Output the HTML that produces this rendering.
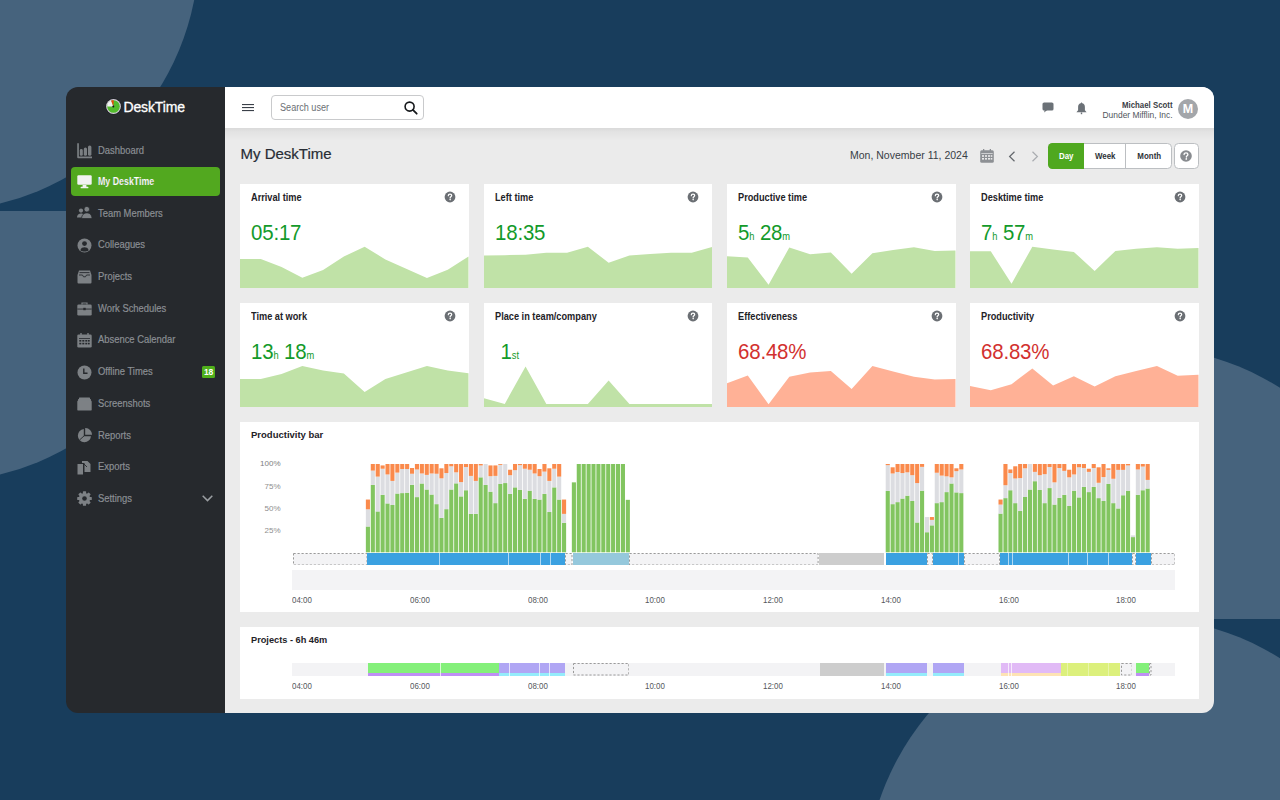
<!DOCTYPE html>
<html><head><meta charset="utf-8">
<style>
*{margin:0;padding:0;box-sizing:border-box}
html,body{width:1280px;height:800px;overflow:hidden}
body{background:#183d5c;font-family:"Liberation Sans",sans-serif;position:relative}
.abs{position:absolute}
.circ{position:absolute;border-radius:50%;background:#46637d}
#app{position:absolute;left:66px;top:87px;width:1147.7px;height:625.5px}
#side{position:absolute;left:0;top:0;width:159px;height:100%;background:#26292d;border-radius:12px 0 0 12px}
#mainbg{position:absolute;left:159px;top:0;right:0;height:100%;background:#ebebeb;border-radius:0 12px 12px 0}
#top{position:absolute;left:159px;top:0;right:0;height:41px;background:#fff;border-radius:0 12px 0 0}
#tsh{position:absolute;left:159px;top:41px;right:0;height:13px;background:linear-gradient(rgba(0,0,0,0.075),rgba(0,0,0,0.035) 30%,rgba(0,0,0,0))}
.mi{position:absolute;left:97.5px;font-size:11px;color:#8b8f94;-webkit-text-stroke:0.2px #8b8f94;line-height:14px;white-space:nowrap;transform:scaleX(0.855) translateY(-0.8px);transform-origin:0 0}
.ic{position:absolute;left:77px}
.card{position:absolute;width:228.5px;height:104.2px;background:#fff;overflow:hidden}
.ct{position:absolute;left:11px;top:8.1px;font-size:10px;font-weight:bold;color:#1e2227;line-height:12px;white-space:nowrap;transform:scaleX(0.92);transform-origin:0 0}
.hq{position:absolute;left:203.9px;top:6.8px}
.cv{position:absolute;left:11px;top:37.3px;font-size:22px;line-height:24px;white-space:nowrap;letter-spacing:-0.2px;transform:scaleX(0.93);transform-origin:0 0}
.cv small{font-size:10px;letter-spacing:0}
.cc{position:absolute;left:0;top:0}
.panel{position:absolute;left:240px;width:958.7px;background:#fff}
.pt{position:absolute;font-size:9.5px;font-weight:bold;color:#1e2227;line-height:12px;white-space:nowrap}
.yl{position:absolute;font-size:8px;color:#8e8e8e;line-height:10px;text-align:right;width:40.5px;left:240px}
.tl{position:absolute;font-size:8.8px;color:#55585c;line-height:10px;white-space:nowrap;transform:scaleX(0.9);transform-origin:0 0}
.dash{position:absolute;background:#f3f3f5;border:1px dashed #a9a9a9}
.seg{position:absolute;top:144.2px;height:25.7px;font-size:9px;font-weight:bold;line-height:25.7px;text-align:center;color:#2d3238;transform:scaleX(0.88)}
</style></head><body>
<div class="circ" style="left:-323.5px;top:-311.5px;width:522px;height:522px"></div>
<div class="abs" style="left:0;top:211px;width:300px;height:300px;overflow:hidden"><div class="circ" style="left:-323.5px;top:-251.5px;width:522px;height:522px"></div></div>
<div class="abs" style="left:800px;top:300px;width:480px;height:319px;overflow:hidden"><div class="circ" style="left:64.8px;top:46.4px;width:541.2px;height:541.2px"></div></div>
<div class="circ" style="left:865.4px;top:616.7px;width:541.2px;height:541.2px"></div>

<div id="app">
  <div id="mainbg"></div><div id="side"></div>
  <div id="top"></div><div id="tsh"></div>
</div>

<!-- logo -->
<svg class="abs" style="left:105px;top:97.6px" width="17" height="17" viewBox="0 0 17 17">
 <circle cx="8.5" cy="8.5" r="8" fill="#1a1c1f"/>
 <circle cx="8.5" cy="8.5" r="7.4" fill="#d2ccd8"/>
 <circle cx="8.5" cy="8.5" r="6.3" fill="#52bb2c"/>
 <path d="M8.4 8.5 L2.2 8.5 A6.3 6.3 0 0 1 6.1 2.6 Z" fill="#f2f0f4"/>
 <path d="M8.4 8.5 L6.1 2.6 A6.3 6.3 0 0 1 8.7 2.2 Z" fill="#f0440f"/>
 <circle cx="8.3" cy="8.5" r="1" fill="#15121c"/>
</svg>
<div class="abs" style="left:123.5px;top:99px;font-size:14px;line-height:17px;color:#fff;letter-spacing:-0.15px;-webkit-text-stroke:0.3px #fff">DeskTime</div>

<!-- menu -->
<svg class="ic" style="top:142.5px" width="16" height="16" viewBox="0 0 16 16" fill="#7b7f83"><path d="M0.2 0.3 H1.9 V13.6 H15 V15.3 H1.2 A1 1 0 0 1 0.2 14.3 Z"/><rect x="2.8" y="6" width="3" height="6.8" rx="1.4"/><rect x="6.8" y="4.4" width="3.2" height="8.4" rx="1.5"/><rect x="11" y="2.4" width="3.4" height="10.4" rx="1.6"/></svg>
<div class="mi" style="top:143.5px">Dashboard</div>

<div class="abs" style="left:70.5px;top:167px;width:149.3px;height:29.3px;border-radius:4px;background:#52a81f"></div>
<svg class="ic" style="top:174.5px" width="15" height="14" viewBox="0 0 15 14" fill="#f2f2f2"><rect x="0.3" y="0.3" width="14.4" height="9.5" rx="1.2"/><rect x="5.6" y="10" width="3.8" height="2"/><rect x="3.6" y="11.8" width="7.8" height="1.5" rx="0.5"/></svg>
<div class="mi" style="top:173.9px;color:#fff;font-weight:bold;font-size:10.5px;transform:scaleX(0.84)">My DeskTime</div>

<svg class="ic" style="top:206px" width="15" height="14" viewBox="0 0 15 14" fill="#7d8185"><circle cx="4" cy="4.6" r="2.1"/><path d="M0 11.6 C0 8.8 1.8 7.6 4 7.6 C5.6 7.6 6.6 8.2 7 9 L6 11.6 Z"/><circle cx="9.8" cy="3.2" r="2.8" stroke="#26292d" stroke-width="0.8"/><path d="M4.6 12.6 C4.6 8.6 7.2 6.9 9.8 6.9 C12.6 6.9 15 8.6 15 12.6 Z" stroke="#26292d" stroke-width="0.8"/></svg>
<div class="mi" style="top:206.5px">Team Members</div>

<svg class="ic" style="top:238px" width="15" height="15" viewBox="0 0 15 15"><circle cx="7.5" cy="7.5" r="7" fill="#7d8185"/><circle cx="7.5" cy="5.6" r="2.4" fill="#26292d"/><path d="M3.3 12.2 C4 9.8 5.8 9.2 7.5 9.2 C9.2 9.2 11 9.8 11.7 12.2 C10.5 13.2 9 13.6 7.5 13.6 C6 13.6 4.5 13.2 3.3 12.2Z" fill="#26292d"/></svg>
<div class="mi" style="top:238.2px">Colleagues</div>

<svg class="ic" style="top:270px" width="15" height="14" viewBox="0 0 15 14" fill="#7d8185"><path d="M2 0.5 H13 L14.5 5 V12.5 A1 1 0 0 1 13.5 13.5 H1.5 A1 1 0 0 1 0.5 12.5 V5 Z"/><rect x="2.5" y="2.2" width="10" height="0.9" fill="#26292d"/><path d="M2 5 H5.5 L6.5 6.8 H8.5 L9.5 5 H13" stroke="#26292d" stroke-width="0.9" fill="none"/></svg>
<div class="mi" style="top:270px">Projects</div>

<svg class="ic" style="top:301.5px" width="15" height="14" viewBox="0 0 15 14" fill="#7d8185"><path d="M5 2.5 V1 H10 V2.5" stroke="#7d8185" stroke-width="1.2" fill="none"/><rect x="0.3" y="2.5" width="14.4" height="11" rx="1.3"/><rect x="0.3" y="6.6" width="14.4" height="0.9" fill="#26292d"/><rect x="6.3" y="5.8" width="2.4" height="2.4" fill="#26292d"/></svg>
<div class="mi" style="top:301.5px">Work Schedules</div>

<svg class="ic" style="top:333px" width="15" height="15" viewBox="0 0 15 15" fill="#7d8185"><rect x="0.3" y="1.5" width="14.4" height="13" rx="1.3"/><rect x="3.3" y="0" width="1.4" height="3"/><rect x="10.3" y="0" width="1.4" height="3"/><g fill="#26292d"><rect x="2" y="5" width="11" height="0.8"/><rect x="2.3" y="7" width="2" height="1.6"/><rect x="5.3" y="7" width="2" height="1.6"/><rect x="8.3" y="7" width="2" height="1.6"/><rect x="11" y="7" width="1.7" height="1.6"/><rect x="2.3" y="9.8" width="2" height="1.6"/><rect x="5.3" y="9.8" width="2" height="1.6"/><rect x="8.3" y="9.8" width="2" height="1.6"/><rect x="11" y="9.8" width="1.7" height="1.6"/></g></svg>
<div class="mi" style="top:333px">Absence Calendar</div>

<svg class="ic" style="top:364.5px" width="15" height="15" viewBox="0 0 15 15"><circle cx="7.5" cy="7.5" r="7" fill="#7d8185"/><path d="M6.8 3.5 V8.2 H10.5" stroke="#26292d" stroke-width="1.4" fill="none"/></svg>
<div class="mi" style="top:364.5px">Offline Times</div>
<div class="abs" style="left:201.8px;top:366px;width:13.2px;height:11.6px;background:#50b01b;border-radius:1.5px;color:#fff;font-size:8.5px;font-weight:bold;line-height:13.4px;text-align:center;letter-spacing:-0.3px">18</div>

<svg class="ic" style="top:396.5px" width="15" height="14" viewBox="0 0 15 14" fill="#7d8185"><rect x="2" y="0.5" width="11" height="2" rx="0.6"/><rect x="1" y="2" width="13" height="2" rx="0.6"/><rect x="0.3" y="3.6" width="14.4" height="10" rx="1.2"/></svg>
<div class="mi" style="top:396.5px">Screenshots</div>

<svg class="ic" style="top:428px" width="15" height="15" viewBox="0 0 15 15" fill="#7d8185"><path d="M6.8 1 A6.6 6.6 0 1 0 14 8.2 H6.8 Z"/><path d="M8.2 0 A6.6 6.6 0 0 1 15 6.8 H8.2 Z"/><path d="M7.5 7.5 L2.5 12" stroke="#26292d" stroke-width="0.9"/></svg>
<div class="mi" style="top:428.5px">Reports</div>

<svg class="ic" style="top:459.5px" width="15" height="15" viewBox="0 0 15 15" fill="#7d8185"><path d="M0.5 4 H6 V14.5 H0.5 Z"/><path d="M5 1 H10.5 L13.5 4 V12 H7.5 V3 H5 Z"/><path d="M7 4 L10 7" stroke="#26292d" stroke-width="0.9"/></svg>
<div class="mi" style="top:459.5px">Exports</div>

<svg class="ic" style="top:491px" width="15" height="15" viewBox="0 0 15 15"><g fill="#7d8185" transform="translate(7.5 7.5)"><circle r="5.6"/><rect x="-1.6" y="-7.3" width="3.2" height="14.6" rx="0.6"/><rect x="-1.6" y="-7.3" width="3.2" height="14.6" rx="0.6" transform="rotate(45)"/><rect x="-1.6" y="-7.3" width="3.2" height="14.6" rx="0.6" transform="rotate(90)"/><rect x="-1.6" y="-7.3" width="3.2" height="14.6" rx="0.6" transform="rotate(135)"/></g><circle cx="7.5" cy="7.5" r="2.3" fill="#26292d"/></svg>
<div class="mi" style="top:492px">Settings</div>
<svg class="abs" style="left:201.5px;top:494.5px" width="11" height="7" viewBox="0 0 11 7"><path d="M0.7 0.8 L5.5 5.6 L10.3 0.8" stroke="#9a9ea2" stroke-width="1.5" fill="none"/></svg>

<!-- topbar -->
<svg class="abs" style="left:242px;top:103px" width="12" height="9" viewBox="0 0 12 9"><g fill="#3a4049"><rect x="0" y="1" width="12" height="1.1"/><rect x="0" y="4" width="12" height="1.1"/><rect x="0" y="7" width="12" height="1.1"/></g></svg>
<div class="abs" style="left:271px;top:94.7px;width:153px;height:25.5px;border:1px solid #c9cacc;border-radius:4px;background:#fff"></div>
<div class="abs" style="left:279.5px;top:102px;font-size:10px;line-height:12px;color:#6b6f74;transform:scaleX(0.91);transform-origin:0 0">Search user</div>
<svg class="abs" style="left:403.5px;top:101.3px" width="14" height="14" viewBox="0 0 14 14"><circle cx="5.6" cy="5.6" r="4.5" stroke="#15181b" stroke-width="1.6" fill="none"/><path d="M8.9 8.9 L12.7 12.7" stroke="#15181b" stroke-width="1.8" stroke-linecap="round"/></svg>

<svg class="abs" style="left:1041.5px;top:102.3px" width="12" height="11" viewBox="0 0 12 11"><rect x="0.5" y="0.4" width="11" height="8.2" rx="1.6" fill="#6b7177"/><path d="M2.6 8 L2.2 10.6 L5.2 8 Z" fill="#6b7177"/></svg>
<svg class="abs" style="left:1075.5px;top:101.5px" width="11" height="13" viewBox="0 0 11 13"><path d="M5.5 0.3 L6.3 1.3 C8.3 1.8 8.9 3.3 8.9 5.3 V8.3 L10.6 10.3 H0.4 L2.1 8.3 V5.3 C2.1 3.3 2.7 1.8 4.7 1.3 Z" fill="#6b7177"/><rect x="4.8" y="10.5" width="1.4" height="1.7" fill="#6b7177"/></svg>

<div class="abs" style="left:1060px;top:99.5px;width:112.5px;text-align:right;font-size:8.8px;line-height:10px;font-weight:bold;color:#3b4046;transform:scaleX(0.89);transform-origin:100% 0">Michael Scott</div>
<div class="abs" style="left:1060px;top:109.9px;width:112.5px;text-align:right;font-size:8.8px;line-height:10px;color:#51565c;transform:scaleX(0.956);transform-origin:100% 0">Dunder Mifflin, Inc.</div>
<div class="abs" style="left:1177.8px;top:98.8px;width:20.4px;height:20.4px;border-radius:50%;background:#a3a6aa;color:#fff;font-size:12.5px;font-weight:bold;line-height:20.4px;text-align:center">M</div>

<!-- header row -->
<div class="abs" style="left:240.5px;top:145px;font-size:15px;line-height:17px;color:#272d35;-webkit-text-stroke:0.2px #272d35">My DeskTime</div>
<div class="abs" style="left:850px;top:148.5px;font-size:11.3px;line-height:13px;color:#383e46;transform:scaleX(0.93);transform-origin:0 0">Mon, November 11, 2024</div>
<svg class="abs" style="left:979.5px;top:149.2px" width="14" height="14" viewBox="0 0 14 14" fill="#8d9094"><rect x="0.2" y="1.3" width="13.6" height="12.4" rx="1.5"/><rect x="3" y="0" width="1.3" height="2.6"/><rect x="9.7" y="0" width="1.3" height="2.6"/><g fill="#ebebeb"><rect x="1.3" y="4.3" width="11.4" height="0.7"/><rect x="2" y="6.2" width="2" height="1.6"/><rect x="5" y="6.2" width="2" height="1.6"/><rect x="8" y="6.2" width="2" height="1.6"/><rect x="10.7" y="6.2" width="1.6" height="1.6"/><rect x="2" y="9" width="2" height="1.6"/><rect x="5" y="9" width="2" height="1.6"/><rect x="8" y="9" width="2" height="1.6"/><rect x="10.7" y="9" width="1.6" height="1.6"/></g></svg>
<svg class="abs" style="left:1007.5px;top:151px" width="8" height="11" viewBox="0 0 8 11"><path d="M6.5 0.7 L1.6 5.5 L6.5 10.3" stroke="#63676c" stroke-width="1.2" fill="none"/></svg>
<svg class="abs" style="left:1030.5px;top:151px" width="8" height="11" viewBox="0 0 8 11"><path d="M1.5 0.7 L6.4 5.5 L1.5 10.3" stroke="#a9acb0" stroke-width="1.2" fill="none"/></svg>

<div class="abs" style="left:1048px;top:143.3px;width:124px;height:26px;border:1.3px solid #bcbfc2;border-radius:4.5px;background:#fff"></div>
<div class="abs" style="left:1048px;top:143.3px;width:35.8px;height:26px;border-radius:4.5px 0 0 4.5px;background:#4fa81f"></div>
<div class="abs" style="left:1124.8px;top:144px;width:1.2px;height:24.5px;background:#bcbfc2"></div>
<div class="seg" style="left:1048px;width:36.5px;color:#fff">Day</div>
<div class="seg" style="left:1084.5px;width:40.5px">Week</div>
<div class="seg" style="left:1125.5px;width:46.5px">Month</div>
<div class="abs" style="left:1174.2px;top:143.3px;width:24.5px;height:26px;border:1.3px solid #bcbfc2;border-radius:4.5px;background:#fff"></div>
<svg class="abs" style="left:1180.3px;top:150.4px" width="12" height="12" viewBox="0 0 12 12"><circle cx="6" cy="6" r="5.8" fill="#888b8f"/><path d="M4.1 4.6 C4.1 3.4 5 2.8 6 2.8 C7.1 2.8 7.9 3.5 7.9 4.4 C7.9 5.5 6.6 5.7 6.4 6.6 L6.4 7.1" stroke="#fff" stroke-width="1.35" fill="none" stroke-linecap="round"/><circle cx="6.3" cy="8.9" r="0.85" fill="#fff"/></svg>

<div class="card" style="left:240px;top:184.2px">
<div class="ct">Arrival time</div><svg class="hq" width="12" height="12" viewBox="0 0 12 12"><circle cx="6" cy="6" r="5.4" fill="#6b6f74"/><path d="M4.3 4.7 C4.3 3.6 5.1 3.1 6 3.1 C7 3.1 7.7 3.7 7.7 4.5 C7.7 5.5 6.5 5.7 6.2 6.5 L6.2 6.9" stroke="#fff" stroke-width="1.25" fill="none" stroke-linecap="round"/><circle cx="6.15" cy="8.6" r="0.8" fill="#fff"/></svg>
<div class="cv" style="color:#139a2a">05:17</div>
<svg class="cc" width="228.5" height="104.2" viewBox="0 0 228.5 104.2"><polygon points="0,104.2 0.00,75.00 20.77,75.00 41.55,83.00 62.32,93.70 83.09,86.00 103.86,72.50 124.64,62.80 145.41,75.40 166.18,84.70 186.95,94.00 207.73,85.70 228.50,72.50 228.5,104.2" fill="#c0e2a7"/></svg>
</div>
<div class="card" style="left:483.5px;top:184.2px">
<div class="ct">Left time</div><svg class="hq" width="12" height="12" viewBox="0 0 12 12"><circle cx="6" cy="6" r="5.4" fill="#6b6f74"/><path d="M4.3 4.7 C4.3 3.6 5.1 3.1 6 3.1 C7 3.1 7.7 3.7 7.7 4.5 C7.7 5.5 6.5 5.7 6.2 6.5 L6.2 6.9" stroke="#fff" stroke-width="1.25" fill="none" stroke-linecap="round"/><circle cx="6.15" cy="8.6" r="0.8" fill="#fff"/></svg>
<div class="cv" style="color:#139a2a">18:35</div>
<svg class="cc" width="228.5" height="104.2" viewBox="0 0 228.5 104.2"><polygon points="0,104.2 0.00,71.60 20.77,71.20 41.55,70.70 62.32,68.80 83.09,68.80 103.86,62.80 124.64,78.70 145.41,71.60 166.18,70.10 186.95,68.80 207.73,68.80 228.50,62.80 228.5,104.2" fill="#c0e2a7"/></svg>
</div>
<div class="card" style="left:727px;top:184.2px">
<div class="ct">Productive time</div><svg class="hq" width="12" height="12" viewBox="0 0 12 12"><circle cx="6" cy="6" r="5.4" fill="#6b6f74"/><path d="M4.3 4.7 C4.3 3.6 5.1 3.1 6 3.1 C7 3.1 7.7 3.7 7.7 4.5 C7.7 5.5 6.5 5.7 6.2 6.5 L6.2 6.9" stroke="#fff" stroke-width="1.25" fill="none" stroke-linecap="round"/><circle cx="6.15" cy="8.6" r="0.8" fill="#fff"/></svg>
<div class="cv" style="color:#139a2a">5<small>h</small> 28<small>m</small></div>
<svg class="cc" width="228.5" height="104.2" viewBox="0 0 228.5 104.2"><polygon points="0,104.2 0.00,72.20 20.77,73.50 41.55,100.70 62.32,63.55 83.09,70.30 103.86,68.40 124.64,89.80 145.41,69.20 166.18,66.00 186.95,63.20 207.73,66.90 228.50,66.40 228.5,104.2" fill="#c0e2a7"/></svg>
</div>
<div class="card" style="left:970.3px;top:184.2px">
<div class="ct">Desktime time</div><svg class="hq" width="12" height="12" viewBox="0 0 12 12"><circle cx="6" cy="6" r="5.4" fill="#6b6f74"/><path d="M4.3 4.7 C4.3 3.6 5.1 3.1 6 3.1 C7 3.1 7.7 3.7 7.7 4.5 C7.7 5.5 6.5 5.7 6.2 6.5 L6.2 6.9" stroke="#fff" stroke-width="1.25" fill="none" stroke-linecap="round"/><circle cx="6.15" cy="8.6" r="0.8" fill="#fff"/></svg>
<div class="cv" style="color:#139a2a">7<small>h</small> 57<small>m</small></div>
<svg class="cc" width="228.5" height="104.2" viewBox="0 0 228.5 104.2"><polygon points="0,104.2 0.00,67.30 20.77,67.30 41.55,99.70 62.32,62.80 83.09,65.40 103.86,67.90 124.64,87.00 145.41,66.90 166.18,64.70 186.95,63.20 207.73,64.70 228.50,64.10 228.5,104.2" fill="#c0e2a7"/></svg>
</div>
<div class="card" style="left:240px;top:303px">
<div class="ct">Time at work</div><svg class="hq" width="12" height="12" viewBox="0 0 12 12"><circle cx="6" cy="6" r="5.4" fill="#6b6f74"/><path d="M4.3 4.7 C4.3 3.6 5.1 3.1 6 3.1 C7 3.1 7.7 3.7 7.7 4.5 C7.7 5.5 6.5 5.7 6.2 6.5 L6.2 6.9" stroke="#fff" stroke-width="1.25" fill="none" stroke-linecap="round"/><circle cx="6.15" cy="8.6" r="0.8" fill="#fff"/></svg>
<div class="cv" style="color:#139a2a">13<small>h</small> 18<small>m</small></div>
<svg class="cc" width="228.5" height="104.2" viewBox="0 0 228.5 104.2"><polygon points="0,104.2 0.00,76.10 20.77,76.10 41.55,70.90 62.32,63.00 83.09,67.50 103.86,70.50 124.64,89.10 145.41,75.90 166.18,69.40 186.95,63.00 207.73,67.50 228.50,70.30 228.5,104.2" fill="#c0e2a7"/></svg>
</div>
<div class="card" style="left:483.5px;top:303px">
<div class="ct">Place in team/company</div><svg class="hq" width="12" height="12" viewBox="0 0 12 12"><circle cx="6" cy="6" r="5.4" fill="#6b6f74"/><path d="M4.3 4.7 C4.3 3.6 5.1 3.1 6 3.1 C7 3.1 7.7 3.7 7.7 4.5 C7.7 5.5 6.5 5.7 6.2 6.5 L6.2 6.9" stroke="#fff" stroke-width="1.25" fill="none" stroke-linecap="round"/><circle cx="6.15" cy="8.6" r="0.8" fill="#fff"/></svg>
<div class="cv" style="color:#139a2a"><span style="padding-left:6px"></span>1<small>st</small></div>
<svg class="cc" width="228.5" height="104.2" viewBox="0 0 228.5 104.2"><polygon points="0,104.2 0.00,95.25 20.77,100.90 41.55,63.40 62.32,100.90 83.09,100.90 103.86,100.90 124.64,77.40 145.41,100.90 166.18,100.90 186.95,100.90 207.73,100.90 228.50,100.90 228.5,104.2" fill="#c0e2a7"/></svg>
</div>
<div class="card" style="left:727px;top:303px">
<div class="ct">Effectiveness</div><svg class="hq" width="12" height="12" viewBox="0 0 12 12"><circle cx="6" cy="6" r="5.4" fill="#6b6f74"/><path d="M4.3 4.7 C4.3 3.6 5.1 3.1 6 3.1 C7 3.1 7.7 3.7 7.7 4.5 C7.7 5.5 6.5 5.7 6.2 6.5 L6.2 6.9" stroke="#fff" stroke-width="1.25" fill="none" stroke-linecap="round"/><circle cx="6.15" cy="8.6" r="0.8" fill="#fff"/></svg>
<div class="cv" style="color:#d2312f">68.48%</div>
<svg class="cc" width="228.5" height="104.2" viewBox="0 0 228.5 104.2"><polygon points="0,104.2 0.00,80.25 20.77,72.40 41.55,101.25 62.32,73.70 83.09,69.40 103.86,68.10 124.64,85.90 145.41,63.00 166.18,68.60 186.95,73.70 207.73,76.50 228.50,76.10 228.5,104.2" fill="#ffb196"/></svg>
</div>
<div class="card" style="left:970.3px;top:303px">
<div class="ct">Productivity</div><svg class="hq" width="12" height="12" viewBox="0 0 12 12"><circle cx="6" cy="6" r="5.4" fill="#6b6f74"/><path d="M4.3 4.7 C4.3 3.6 5.1 3.1 6 3.1 C7 3.1 7.7 3.7 7.7 4.5 C7.7 5.5 6.5 5.7 6.2 6.5 L6.2 6.9" stroke="#fff" stroke-width="1.25" fill="none" stroke-linecap="round"/><circle cx="6.15" cy="8.6" r="0.8" fill="#fff"/></svg>
<div class="cv" style="color:#d2312f">68.83%</div>
<svg class="cc" width="228.5" height="104.2" viewBox="0 0 228.5 104.2"><polygon points="0,104.2 0.00,83.10 20.77,87.20 41.55,81.20 62.32,65.60 83.09,82.50 103.86,73.30 124.64,83.40 145.41,73.30 166.18,68.10 186.95,63.00 207.73,72.75 228.50,71.80 228.5,104.2" fill="#ffb196"/></svg>
</div>

<!-- productivity panel -->
<div class="panel" style="top:421.8px;height:190.2px"></div>
<div class="pt" style="left:251px;top:429px">Productivity bar</div>
<div class="yl" style="top:459.2px;color:#7e7e7e">100%</div>
<div class="yl" style="top:481.6px">75%</div>
<div class="yl" style="top:503.6px">50%</div>
<div class="yl" style="top:525.6px">25%</div>
<svg class="abs" style="left:0;top:0" width="1280" height="800" viewBox="0 0 1280 800">
<rect x="365.86" y="526.50" width="4.10" height="25.80" fill="#82c560"/>
<rect x="365.86" y="509.30" width="4.10" height="17.20" fill="#dcdde1"/>
<rect x="365.86" y="499.55" width="4.10" height="9.75" fill="#fa8a4c"/>
<rect x="370.77" y="484.93" width="4.10" height="67.37" fill="#82c560"/>
<rect x="370.77" y="470.59" width="4.10" height="14.33" fill="#dcdde1"/>
<rect x="370.77" y="464.00" width="4.10" height="6.59" fill="#fa8a4c"/>
<rect x="375.67" y="511.45" width="4.10" height="40.85" fill="#82c560"/>
<rect x="375.67" y="476.61" width="4.10" height="34.83" fill="#dcdde1"/>
<rect x="375.67" y="464.00" width="4.10" height="12.61" fill="#fa8a4c"/>
<rect x="380.57" y="494.82" width="4.10" height="57.48" fill="#82c560"/>
<rect x="380.57" y="468.73" width="4.10" height="26.09" fill="#dcdde1"/>
<rect x="380.57" y="465.43" width="4.10" height="3.30" fill="#fa8a4c"/>
<rect x="385.48" y="503.42" width="4.10" height="48.88" fill="#82c560"/>
<rect x="385.48" y="474.46" width="4.10" height="28.96" fill="#dcdde1"/>
<rect x="385.48" y="464.00" width="4.10" height="10.46" fill="#fa8a4c"/>
<rect x="390.38" y="505.00" width="4.10" height="47.30" fill="#82c560"/>
<rect x="390.38" y="480.91" width="4.10" height="24.08" fill="#dcdde1"/>
<rect x="390.38" y="464.00" width="4.10" height="16.91" fill="#fa8a4c"/>
<rect x="395.29" y="493.53" width="4.10" height="58.77" fill="#82c560"/>
<rect x="395.29" y="472.60" width="4.10" height="20.93" fill="#dcdde1"/>
<rect x="395.29" y="464.00" width="4.10" height="8.60" fill="#fa8a4c"/>
<rect x="400.19" y="493.10" width="4.10" height="59.20" fill="#82c560"/>
<rect x="400.19" y="469.02" width="4.10" height="24.08" fill="#dcdde1"/>
<rect x="400.19" y="464.00" width="4.10" height="5.02" fill="#fa8a4c"/>
<rect x="405.09" y="492.67" width="4.10" height="59.63" fill="#82c560"/>
<rect x="405.09" y="469.02" width="4.10" height="23.65" fill="#dcdde1"/>
<rect x="405.09" y="464.00" width="4.10" height="5.02" fill="#fa8a4c"/>
<rect x="410.00" y="484.78" width="4.10" height="67.52" fill="#82c560"/>
<rect x="410.00" y="473.75" width="4.10" height="11.04" fill="#dcdde1"/>
<rect x="410.00" y="468.01" width="4.10" height="5.73" fill="#fa8a4c"/>
<rect x="414.90" y="497.11" width="4.10" height="55.19" fill="#82c560"/>
<rect x="414.90" y="469.45" width="4.10" height="27.67" fill="#dcdde1"/>
<rect x="414.90" y="464.00" width="4.10" height="5.45" fill="#fa8a4c"/>
<rect x="419.81" y="483.49" width="4.10" height="68.81" fill="#82c560"/>
<rect x="419.81" y="473.46" width="4.10" height="10.03" fill="#dcdde1"/>
<rect x="419.81" y="464.00" width="4.10" height="9.46" fill="#fa8a4c"/>
<rect x="424.71" y="489.52" width="4.10" height="62.78" fill="#82c560"/>
<rect x="424.71" y="474.89" width="4.10" height="14.62" fill="#dcdde1"/>
<rect x="424.71" y="464.00" width="4.10" height="10.89" fill="#fa8a4c"/>
<rect x="429.61" y="494.53" width="4.10" height="57.77" fill="#82c560"/>
<rect x="429.61" y="473.46" width="4.10" height="21.07" fill="#dcdde1"/>
<rect x="429.61" y="464.00" width="4.10" height="9.46" fill="#fa8a4c"/>
<rect x="434.52" y="504.14" width="4.10" height="48.16" fill="#82c560"/>
<rect x="434.52" y="473.75" width="4.10" height="30.39" fill="#dcdde1"/>
<rect x="434.52" y="464.00" width="4.10" height="9.75" fill="#fa8a4c"/>
<rect x="439.42" y="517.90" width="4.10" height="34.40" fill="#82c560"/>
<rect x="439.42" y="478.33" width="4.10" height="39.56" fill="#dcdde1"/>
<rect x="439.42" y="468.30" width="4.10" height="10.03" fill="#fa8a4c"/>
<rect x="444.33" y="509.15" width="4.10" height="43.15" fill="#82c560"/>
<rect x="444.33" y="473.03" width="4.10" height="36.12" fill="#dcdde1"/>
<rect x="444.33" y="464.00" width="4.10" height="9.03" fill="#fa8a4c"/>
<rect x="449.23" y="489.52" width="4.10" height="62.78" fill="#82c560"/>
<rect x="449.23" y="466.29" width="4.10" height="23.22" fill="#dcdde1"/>
<rect x="449.23" y="464.00" width="4.10" height="2.29" fill="#fa8a4c"/>
<rect x="454.13" y="483.35" width="4.10" height="68.95" fill="#82c560"/>
<rect x="454.13" y="472.31" width="4.10" height="11.04" fill="#dcdde1"/>
<rect x="454.13" y="464.00" width="4.10" height="8.31" fill="#fa8a4c"/>
<rect x="459.04" y="496.40" width="4.10" height="55.90" fill="#82c560"/>
<rect x="459.04" y="482.06" width="4.10" height="14.33" fill="#dcdde1"/>
<rect x="459.04" y="464.00" width="4.10" height="18.06" fill="#fa8a4c"/>
<rect x="463.94" y="490.23" width="4.10" height="62.07" fill="#82c560"/>
<rect x="463.94" y="467.01" width="4.10" height="23.22" fill="#dcdde1"/>
<rect x="463.94" y="464.00" width="4.10" height="3.01" fill="#fa8a4c"/>
<rect x="468.85" y="513.88" width="4.10" height="38.42" fill="#82c560"/>
<rect x="468.85" y="475.90" width="4.10" height="37.99" fill="#dcdde1"/>
<rect x="468.85" y="464.00" width="4.10" height="11.90" fill="#fa8a4c"/>
<rect x="473.75" y="513.88" width="4.10" height="38.42" fill="#82c560"/>
<rect x="473.75" y="480.91" width="4.10" height="32.97" fill="#dcdde1"/>
<rect x="473.75" y="464.00" width="4.10" height="16.91" fill="#fa8a4c"/>
<rect x="478.65" y="477.33" width="4.10" height="74.97" fill="#82c560"/>
<rect x="478.65" y="465.43" width="4.10" height="11.90" fill="#dcdde1"/>
<rect x="478.65" y="464.00" width="4.10" height="1.43" fill="#fa8a4c"/>
<rect x="483.56" y="484.93" width="4.10" height="67.37" fill="#82c560"/>
<rect x="483.56" y="464.00" width="4.10" height="20.93" fill="#dcdde1"/>
<rect x="488.46" y="491.67" width="4.10" height="60.63" fill="#82c560"/>
<rect x="488.46" y="476.18" width="4.10" height="15.48" fill="#dcdde1"/>
<rect x="488.46" y="465.43" width="4.10" height="10.75" fill="#fa8a4c"/>
<rect x="493.37" y="503.13" width="4.10" height="49.17" fill="#82c560"/>
<rect x="493.37" y="475.90" width="4.10" height="27.24" fill="#dcdde1"/>
<rect x="493.37" y="465.43" width="4.10" height="10.46" fill="#fa8a4c"/>
<rect x="498.27" y="483.78" width="4.10" height="68.52" fill="#82c560"/>
<rect x="498.27" y="464.86" width="4.10" height="18.92" fill="#dcdde1"/>
<rect x="498.27" y="464.00" width="4.10" height="0.86" fill="#fa8a4c"/>
<rect x="503.17" y="483.06" width="4.10" height="69.24" fill="#82c560"/>
<rect x="503.17" y="464.00" width="4.10" height="19.06" fill="#dcdde1"/>
<rect x="508.08" y="493.82" width="4.10" height="58.48" fill="#82c560"/>
<rect x="508.08" y="475.18" width="4.10" height="18.63" fill="#dcdde1"/>
<rect x="508.08" y="469.73" width="4.10" height="5.45" fill="#fa8a4c"/>
<rect x="512.98" y="487.37" width="4.10" height="64.93" fill="#82c560"/>
<rect x="512.98" y="470.16" width="4.10" height="17.20" fill="#dcdde1"/>
<rect x="512.98" y="464.00" width="4.10" height="6.16" fill="#fa8a4c"/>
<rect x="517.89" y="489.80" width="4.10" height="62.50" fill="#82c560"/>
<rect x="517.89" y="465.15" width="4.10" height="24.66" fill="#dcdde1"/>
<rect x="517.89" y="464.00" width="4.10" height="1.15" fill="#fa8a4c"/>
<rect x="522.79" y="498.83" width="4.10" height="53.47" fill="#82c560"/>
<rect x="522.79" y="468.73" width="4.10" height="30.10" fill="#dcdde1"/>
<rect x="522.79" y="464.00" width="4.10" height="4.73" fill="#fa8a4c"/>
<rect x="527.69" y="490.66" width="4.10" height="61.64" fill="#82c560"/>
<rect x="527.69" y="469.73" width="4.10" height="20.93" fill="#dcdde1"/>
<rect x="527.69" y="464.00" width="4.10" height="5.73" fill="#fa8a4c"/>
<rect x="532.60" y="498.83" width="4.10" height="53.47" fill="#82c560"/>
<rect x="532.60" y="473.46" width="4.10" height="25.37" fill="#dcdde1"/>
<rect x="532.60" y="464.00" width="4.10" height="9.46" fill="#fa8a4c"/>
<rect x="537.50" y="499.55" width="4.10" height="52.75" fill="#82c560"/>
<rect x="537.50" y="476.18" width="4.10" height="23.37" fill="#dcdde1"/>
<rect x="537.50" y="469.02" width="4.10" height="7.17" fill="#fa8a4c"/>
<rect x="542.41" y="493.82" width="4.10" height="58.48" fill="#82c560"/>
<rect x="542.41" y="471.60" width="4.10" height="22.22" fill="#dcdde1"/>
<rect x="542.41" y="464.00" width="4.10" height="7.60" fill="#fa8a4c"/>
<rect x="547.31" y="512.02" width="4.10" height="40.28" fill="#82c560"/>
<rect x="547.31" y="480.91" width="4.10" height="31.11" fill="#dcdde1"/>
<rect x="547.31" y="468.30" width="4.10" height="12.61" fill="#fa8a4c"/>
<rect x="552.21" y="487.37" width="4.10" height="64.93" fill="#82c560"/>
<rect x="552.21" y="468.73" width="4.10" height="18.63" fill="#dcdde1"/>
<rect x="552.21" y="464.00" width="4.10" height="4.73" fill="#fa8a4c"/>
<rect x="557.12" y="499.55" width="4.10" height="52.75" fill="#82c560"/>
<rect x="557.12" y="476.61" width="4.10" height="22.94" fill="#dcdde1"/>
<rect x="557.12" y="464.00" width="4.10" height="12.61" fill="#fa8a4c"/>
<rect x="562.02" y="522.91" width="4.10" height="29.39" fill="#82c560"/>
<rect x="562.02" y="513.88" width="4.10" height="9.03" fill="#dcdde1"/>
<rect x="562.02" y="499.55" width="4.10" height="14.33" fill="#fa8a4c"/><rect x="571.84" y="482.35" width="4.10" height="69.95" fill="#82c560"/>
<rect x="576.74" y="464.00" width="4.10" height="88.30" fill="#82c560"/>
<rect x="581.65" y="464.00" width="4.10" height="88.30" fill="#82c560"/>
<rect x="586.55" y="464.00" width="4.10" height="88.30" fill="#82c560"/>
<rect x="591.45" y="464.00" width="4.10" height="88.30" fill="#82c560"/>
<rect x="596.36" y="464.00" width="4.10" height="88.30" fill="#82c560"/>
<rect x="601.26" y="464.00" width="4.10" height="88.30" fill="#82c560"/>
<rect x="606.17" y="464.00" width="4.10" height="88.30" fill="#82c560"/>
<rect x="611.07" y="464.00" width="4.10" height="88.30" fill="#82c560"/>
<rect x="615.97" y="464.00" width="4.10" height="88.30" fill="#82c560"/>
<rect x="620.88" y="464.00" width="4.10" height="88.30" fill="#82c560"/>
<rect x="625.78" y="499.84" width="4.10" height="52.46" fill="#82c560"/><rect x="885.70" y="490.95" width="4.10" height="61.35" fill="#82c560"/>
<rect x="885.70" y="465.15" width="4.10" height="25.80" fill="#dcdde1"/>
<rect x="885.70" y="464.00" width="4.10" height="1.15" fill="#fa8a4c"/>
<rect x="890.61" y="504.14" width="4.10" height="48.16" fill="#82c560"/>
<rect x="890.61" y="473.46" width="4.10" height="30.68" fill="#dcdde1"/>
<rect x="890.61" y="467.30" width="4.10" height="6.16" fill="#fa8a4c"/>
<rect x="895.51" y="502.13" width="4.10" height="50.17" fill="#82c560"/>
<rect x="895.51" y="472.03" width="4.10" height="30.10" fill="#dcdde1"/>
<rect x="895.51" y="464.00" width="4.10" height="8.03" fill="#fa8a4c"/>
<rect x="900.42" y="498.55" width="4.10" height="53.75" fill="#82c560"/>
<rect x="900.42" y="473.03" width="4.10" height="25.52" fill="#dcdde1"/>
<rect x="900.42" y="464.00" width="4.10" height="9.03" fill="#fa8a4c"/>
<rect x="905.32" y="495.68" width="4.10" height="56.62" fill="#82c560"/>
<rect x="905.32" y="472.31" width="4.10" height="23.37" fill="#dcdde1"/>
<rect x="905.32" y="464.00" width="4.10" height="8.31" fill="#fa8a4c"/>
<rect x="910.22" y="500.98" width="4.10" height="51.32" fill="#82c560"/>
<rect x="910.22" y="475.18" width="4.10" height="25.80" fill="#dcdde1"/>
<rect x="910.22" y="464.00" width="4.10" height="11.18" fill="#fa8a4c"/>
<rect x="915.13" y="522.48" width="4.10" height="29.82" fill="#82c560"/>
<rect x="915.13" y="483.06" width="4.10" height="39.42" fill="#dcdde1"/>
<rect x="915.13" y="464.00" width="4.10" height="19.06" fill="#fa8a4c"/>
<rect x="920.03" y="490.66" width="4.10" height="61.64" fill="#82c560"/>
<rect x="920.03" y="466.87" width="4.10" height="23.80" fill="#dcdde1"/>
<rect x="920.03" y="464.00" width="4.10" height="2.87" fill="#fa8a4c"/>
<rect x="924.94" y="532.23" width="4.10" height="20.07" fill="#82c560"/>
<rect x="924.94" y="517.04" width="4.10" height="15.19" fill="#dcdde1"/>
<rect x="929.84" y="525.35" width="4.10" height="26.95" fill="#82c560"/>
<rect x="929.84" y="519.90" width="4.10" height="5.45" fill="#dcdde1"/>
<rect x="929.84" y="517.04" width="4.10" height="2.87" fill="#fa8a4c"/>
<rect x="934.74" y="503.13" width="4.10" height="49.17" fill="#82c560"/>
<rect x="934.74" y="472.74" width="4.10" height="30.39" fill="#dcdde1"/>
<rect x="934.74" y="464.00" width="4.10" height="8.74" fill="#fa8a4c"/>
<rect x="939.65" y="502.13" width="4.10" height="50.17" fill="#82c560"/>
<rect x="939.65" y="475.61" width="4.10" height="26.52" fill="#dcdde1"/>
<rect x="939.65" y="464.00" width="4.10" height="11.61" fill="#fa8a4c"/>
<rect x="944.55" y="492.10" width="4.10" height="60.20" fill="#82c560"/>
<rect x="944.55" y="476.33" width="4.10" height="15.77" fill="#dcdde1"/>
<rect x="944.55" y="464.00" width="4.10" height="12.33" fill="#fa8a4c"/>
<rect x="949.46" y="483.49" width="4.10" height="68.81" fill="#82c560"/>
<rect x="949.46" y="477.33" width="4.10" height="6.16" fill="#dcdde1"/>
<rect x="949.46" y="464.00" width="4.10" height="13.33" fill="#fa8a4c"/>
<rect x="954.36" y="492.38" width="4.10" height="59.92" fill="#82c560"/>
<rect x="954.36" y="471.17" width="4.10" height="21.21" fill="#dcdde1"/>
<rect x="954.36" y="468.30" width="4.10" height="2.87" fill="#fa8a4c"/>
<rect x="959.26" y="493.10" width="4.10" height="59.20" fill="#82c560"/>
<rect x="959.26" y="469.45" width="4.10" height="23.65" fill="#dcdde1"/>
<rect x="959.26" y="464.00" width="4.10" height="5.45" fill="#fa8a4c"/><rect x="998.50" y="513.60" width="4.10" height="38.70" fill="#82c560"/>
<rect x="998.50" y="504.57" width="4.10" height="9.03" fill="#dcdde1"/>
<rect x="998.50" y="499.55" width="4.10" height="5.02" fill="#fa8a4c"/>
<rect x="1003.40" y="498.12" width="4.10" height="54.18" fill="#82c560"/>
<rect x="1003.40" y="485.21" width="4.10" height="12.90" fill="#dcdde1"/>
<rect x="1003.40" y="464.00" width="4.10" height="21.21" fill="#fa8a4c"/>
<rect x="1008.31" y="490.23" width="4.10" height="62.07" fill="#82c560"/>
<rect x="1008.31" y="473.03" width="4.10" height="17.20" fill="#dcdde1"/>
<rect x="1008.31" y="469.45" width="4.10" height="3.58" fill="#fa8a4c"/>
<rect x="1013.21" y="503.13" width="4.10" height="49.17" fill="#82c560"/>
<rect x="1013.21" y="478.48" width="4.10" height="24.66" fill="#dcdde1"/>
<rect x="1013.21" y="466.29" width="4.10" height="12.18" fill="#fa8a4c"/>
<rect x="1018.12" y="511.02" width="4.10" height="41.28" fill="#82c560"/>
<rect x="1018.12" y="478.05" width="4.10" height="32.97" fill="#dcdde1"/>
<rect x="1018.12" y="464.00" width="4.10" height="14.05" fill="#fa8a4c"/>
<rect x="1023.02" y="496.97" width="4.10" height="55.33" fill="#82c560"/>
<rect x="1023.02" y="468.30" width="4.10" height="28.67" fill="#dcdde1"/>
<rect x="1023.02" y="464.00" width="4.10" height="4.30" fill="#fa8a4c"/>
<rect x="1027.92" y="489.52" width="4.10" height="62.78" fill="#82c560"/>
<rect x="1027.92" y="464.00" width="4.10" height="25.52" fill="#dcdde1"/>
<rect x="1032.83" y="481.20" width="4.10" height="71.10" fill="#82c560"/>
<rect x="1032.83" y="471.88" width="4.10" height="9.32" fill="#dcdde1"/>
<rect x="1032.83" y="464.00" width="4.10" height="7.88" fill="#fa8a4c"/>
<rect x="1037.73" y="489.95" width="4.10" height="62.35" fill="#82c560"/>
<rect x="1037.73" y="475.18" width="4.10" height="14.76" fill="#dcdde1"/>
<rect x="1037.73" y="464.00" width="4.10" height="11.18" fill="#fa8a4c"/>
<rect x="1042.64" y="503.13" width="4.10" height="49.17" fill="#82c560"/>
<rect x="1042.64" y="474.18" width="4.10" height="28.96" fill="#dcdde1"/>
<rect x="1042.64" y="464.00" width="4.10" height="10.18" fill="#fa8a4c"/>
<rect x="1047.54" y="488.08" width="4.10" height="64.22" fill="#82c560"/>
<rect x="1047.54" y="467.01" width="4.10" height="21.07" fill="#dcdde1"/>
<rect x="1047.54" y="464.00" width="4.10" height="3.01" fill="#fa8a4c"/>
<rect x="1052.44" y="504.57" width="4.10" height="47.73" fill="#82c560"/>
<rect x="1052.44" y="482.35" width="4.10" height="22.22" fill="#dcdde1"/>
<rect x="1052.44" y="464.00" width="4.10" height="18.35" fill="#fa8a4c"/>
<rect x="1057.35" y="497.83" width="4.10" height="54.47" fill="#82c560"/>
<rect x="1057.35" y="468.01" width="4.10" height="29.82" fill="#dcdde1"/>
<rect x="1057.35" y="464.00" width="4.10" height="4.01" fill="#fa8a4c"/>
<rect x="1062.25" y="494.82" width="4.10" height="57.48" fill="#82c560"/>
<rect x="1062.25" y="470.88" width="4.10" height="23.94" fill="#dcdde1"/>
<rect x="1062.25" y="464.00" width="4.10" height="6.88" fill="#fa8a4c"/>
<rect x="1067.16" y="506.00" width="4.10" height="46.30" fill="#82c560"/>
<rect x="1067.16" y="477.33" width="4.10" height="28.67" fill="#dcdde1"/>
<rect x="1067.16" y="469.73" width="4.10" height="7.60" fill="#fa8a4c"/>
<rect x="1072.06" y="490.66" width="4.10" height="61.64" fill="#82c560"/>
<rect x="1072.06" y="474.46" width="4.10" height="16.20" fill="#dcdde1"/>
<rect x="1072.06" y="464.00" width="4.10" height="10.46" fill="#fa8a4c"/>
<rect x="1076.96" y="497.40" width="4.10" height="54.90" fill="#82c560"/>
<rect x="1076.96" y="467.30" width="4.10" height="30.10" fill="#dcdde1"/>
<rect x="1076.96" y="464.00" width="4.10" height="3.30" fill="#fa8a4c"/>
<rect x="1081.87" y="486.94" width="4.10" height="65.36" fill="#82c560"/>
<rect x="1081.87" y="468.01" width="4.10" height="18.92" fill="#dcdde1"/>
<rect x="1081.87" y="464.00" width="4.10" height="4.01" fill="#fa8a4c"/>
<rect x="1086.77" y="492.10" width="4.10" height="60.20" fill="#82c560"/>
<rect x="1086.77" y="471.88" width="4.10" height="20.21" fill="#dcdde1"/>
<rect x="1086.77" y="468.73" width="4.10" height="3.15" fill="#fa8a4c"/>
<rect x="1091.68" y="486.94" width="4.10" height="65.36" fill="#82c560"/>
<rect x="1091.68" y="468.01" width="4.10" height="18.92" fill="#dcdde1"/>
<rect x="1091.68" y="464.00" width="4.10" height="4.01" fill="#fa8a4c"/>
<rect x="1096.58" y="498.12" width="4.10" height="54.18" fill="#82c560"/>
<rect x="1096.58" y="482.78" width="4.10" height="15.34" fill="#dcdde1"/>
<rect x="1096.58" y="467.30" width="4.10" height="15.48" fill="#fa8a4c"/>
<rect x="1101.48" y="500.98" width="4.10" height="51.32" fill="#82c560"/>
<rect x="1101.48" y="477.04" width="4.10" height="23.94" fill="#dcdde1"/>
<rect x="1101.48" y="464.00" width="4.10" height="13.04" fill="#fa8a4c"/>
<rect x="1106.39" y="483.78" width="4.10" height="68.52" fill="#82c560"/>
<rect x="1106.39" y="469.88" width="4.10" height="13.90" fill="#dcdde1"/>
<rect x="1106.39" y="468.30" width="4.10" height="1.58" fill="#fa8a4c"/>
<rect x="1111.29" y="503.13" width="4.10" height="49.17" fill="#82c560"/>
<rect x="1111.29" y="478.76" width="4.10" height="24.37" fill="#dcdde1"/>
<rect x="1111.29" y="464.00" width="4.10" height="14.76" fill="#fa8a4c"/>
<rect x="1116.20" y="508.44" width="4.10" height="43.86" fill="#82c560"/>
<rect x="1116.20" y="469.88" width="4.10" height="38.56" fill="#dcdde1"/>
<rect x="1116.20" y="464.00" width="4.10" height="5.88" fill="#fa8a4c"/>
<rect x="1121.10" y="495.25" width="4.10" height="57.05" fill="#82c560"/>
<rect x="1121.10" y="469.88" width="4.10" height="25.37" fill="#dcdde1"/>
<rect x="1121.10" y="464.00" width="4.10" height="5.88" fill="#fa8a4c"/>
<rect x="1126.00" y="490.66" width="4.10" height="61.64" fill="#82c560"/>
<rect x="1126.00" y="465.43" width="4.10" height="25.23" fill="#dcdde1"/>
<rect x="1126.00" y="464.00" width="4.10" height="1.43" fill="#fa8a4c"/>
<rect x="1130.91" y="537.11" width="4.10" height="15.19" fill="#82c560"/>
<rect x="1130.91" y="535.39" width="4.10" height="1.72" fill="#dcdde1"/>
<rect x="1135.81" y="494.82" width="4.10" height="57.48" fill="#82c560"/>
<rect x="1135.81" y="469.45" width="4.10" height="25.37" fill="#dcdde1"/>
<rect x="1135.81" y="464.00" width="4.10" height="5.45" fill="#fa8a4c"/>
<rect x="1140.72" y="490.23" width="4.10" height="62.07" fill="#82c560"/>
<rect x="1140.72" y="466.58" width="4.10" height="23.65" fill="#dcdde1"/>
<rect x="1140.72" y="464.00" width="4.10" height="2.58" fill="#fa8a4c"/>
<rect x="1145.62" y="488.51" width="4.10" height="63.79" fill="#82c560"/>
<rect x="1145.62" y="479.91" width="4.10" height="8.60" fill="#dcdde1"/>
<rect x="1145.62" y="464.00" width="4.10" height="15.91" fill="#fa8a4c"/>
</svg>
<svg class="abs" style="left:292.5px;top:552.5px" width="74.5" height="12.5"><rect x="0.5" y="0.5" width="73.5" height="11.5" fill="#f3f3f5" stroke="#9a9a9a" stroke-width="1" stroke-dasharray="2.2 1.8"/></svg>
<div class="abs" style="left:367.0px;top:552.5px;width:198.0px;height:12.5px;background:#3ba1e1"></div>
<svg class="abs" style="left:565.0px;top:552.5px" width="7.5" height="12.5"><rect x="0.5" y="0.5" width="6.5" height="11.5" fill="#f3f3f5" stroke="#9a9a9a" stroke-width="1" stroke-dasharray="2.2 1.8"/></svg>
<div class="abs" style="left:572.5px;top:552.5px;width:56.9px;height:12.5px;background:#95c8dc"></div>
<svg class="abs" style="left:629.4px;top:552.5px" width="189.6" height="12.5"><rect x="0.5" y="0.5" width="188.6" height="11.5" fill="#f3f3f5" stroke="#9a9a9a" stroke-width="1" stroke-dasharray="2.2 1.8"/></svg>
<div class="abs" style="left:819.0px;top:552.5px;width:65.3px;height:12.5px;background:#cdcdcd"></div>
<div class="abs" style="left:885.8px;top:552.5px;width:41.2px;height:12.5px;background:#3ba1e1"></div>
<svg class="abs" style="left:927.0px;top:552.5px" width="6.0" height="12.5"><rect x="0.5" y="0.5" width="5.0" height="11.5" fill="#f3f3f5" stroke="#9a9a9a" stroke-width="1" stroke-dasharray="2.2 1.8"/></svg>
<div class="abs" style="left:933.0px;top:552.5px;width:31.0px;height:12.5px;background:#3ba1e1"></div>
<svg class="abs" style="left:964.0px;top:552.5px" width="36.0" height="12.5"><rect x="0.5" y="0.5" width="35.0" height="11.5" fill="#f3f3f5" stroke="#9a9a9a" stroke-width="1" stroke-dasharray="2.2 1.8"/></svg>
<div class="abs" style="left:1000.0px;top:552.5px;width:132.0px;height:12.5px;background:#3ba1e1"></div>
<svg class="abs" style="left:1132.0px;top:552.5px" width="4.0" height="12.5"><rect x="0.5" y="0.5" width="3.0" height="11.5" fill="#f3f3f5" stroke="#9a9a9a" stroke-width="1" stroke-dasharray="2.2 1.8"/></svg>
<div class="abs" style="left:1136.0px;top:552.5px;width:14.5px;height:12.5px;background:#3ba1e1"></div>
<svg class="abs" style="left:1150.5px;top:552.5px" width="24.5" height="12.5"><rect x="0.5" y="0.5" width="23.5" height="11.5" fill="#f3f3f5" stroke="#9a9a9a" stroke-width="1" stroke-dasharray="2.2 1.8"/></svg>
<div class="abs" style="left:292.3px;top:570.2px;width:882.7px;height:19.699999999999932px;background:#f3f3f5"></div>
<div class="abs" style="left:439.0px;top:552.5px;width:0.8px;height:12.5px;background:rgba(255,255,255,0.6)"></div>
<div class="abs" style="left:508.1px;top:552.5px;width:0.8px;height:12.5px;background:rgba(255,255,255,0.6)"></div>
<div class="abs" style="left:539.8px;top:552.5px;width:0.8px;height:12.5px;background:rgba(255,255,255,0.6)"></div>
<div class="abs" style="left:549.8px;top:552.5px;width:0.8px;height:12.5px;background:rgba(255,255,255,0.6)"></div>
<div class="abs" style="left:958.3px;top:552.5px;width:0.8px;height:12.5px;background:rgba(255,255,255,0.6)"></div>
<div class="abs" style="left:1008.0px;top:552.5px;width:0.8px;height:12.5px;background:rgba(255,255,255,0.6)"></div>
<div class="abs" style="left:1011.6px;top:552.5px;width:0.8px;height:12.5px;background:rgba(255,255,255,0.6)"></div>
<div class="abs" style="left:1067.6px;top:552.5px;width:0.8px;height:12.5px;background:rgba(255,255,255,0.6)"></div>
<div class="abs" style="left:1087.3px;top:552.5px;width:0.8px;height:12.5px;background:rgba(255,255,255,0.6)"></div>
<div class="abs" style="left:1107.7px;top:552.5px;width:0.8px;height:12.5px;background:rgba(255,255,255,0.6)"></div>
<div class="tl" style="left:292.3px;top:595.2px">04:00</div>
<div class="tl" style="left:410.0px;top:595.2px">06:00</div>
<div class="tl" style="left:527.7px;top:595.2px">08:00</div>
<div class="tl" style="left:645.4px;top:595.2px">10:00</div>
<div class="tl" style="left:763.1px;top:595.2px">12:00</div>
<div class="tl" style="left:880.8px;top:595.2px">14:00</div>
<div class="tl" style="left:998.5px;top:595.2px">16:00</div>
<div class="tl" style="left:1116.2px;top:595.2px">18:00</div>

<!-- projects panel -->
<div class="panel" style="top:627px;height:71.6px"></div>
<div class="pt" style="left:250.8px;top:633.8px;transform:scaleX(0.97);transform-origin:0 0">Projects - 6h 46m</div>
<div class="abs" style="left:292.3px;top:663.3px;width:882.7px;height:12.5px;background:#f3f3f5"></div>
<div class="abs" style="left:367.5px;top:663.3px;width:131.5px;height:9.5px;background:#84f07a"></div>
<div class="abs" style="left:367.5px;top:672.8px;width:131.5px;height:3.0px;background:#bf8ff5"></div>
<div class="abs" style="left:499.0px;top:663.3px;width:66.0px;height:9.5px;background:#b0a6f4"></div>
<div class="abs" style="left:499.0px;top:672.8px;width:66.0px;height:3.0px;background:#94ecfb"></div>
<svg class="abs" style="left:572.5px;top:663.3px" width="56.3" height="12.5"><rect x="0.5" y="0.5" width="55.3" height="11.5" fill="#f3f3f5" stroke="#9a9a9a" stroke-width="1" stroke-dasharray="2.2 1.8"/></svg>
<div class="abs" style="left:820.2px;top:663.3px;width:64.2px;height:12.5px;background:#cdcdcd"></div>
<div class="abs" style="left:885.9px;top:663.3px;width:41.6px;height:9.5px;background:#b0a6f4"></div>
<div class="abs" style="left:885.9px;top:672.8px;width:41.6px;height:3.0px;background:#94ecfb"></div>
<div class="abs" style="left:933.1px;top:663.3px;width:31.0px;height:9.5px;background:#b0a6f4"></div>
<div class="abs" style="left:933.1px;top:672.8px;width:31.0px;height:3.0px;background:#94ecfb"></div>
<div class="abs" style="left:1000.6px;top:663.3px;width:60.0px;height:9.5px;background:#e1baf6"></div>
<div class="abs" style="left:1000.6px;top:672.8px;width:60.0px;height:3.0px;background:#fde3b4"></div>
<div class="abs" style="left:1060.6px;top:663.3px;width:59.9px;height:12.5px;background:#dcf07c"></div>
<svg class="abs" style="left:1120.5px;top:663.3px" width="11.7" height="12.5"><rect x="0.5" y="0.5" width="10.7" height="11.5" fill="#f3f3f5" stroke="#9a9a9a" stroke-width="1" stroke-dasharray="2.2 1.8"/></svg>
<div class="abs" style="left:1136.0px;top:663.3px;width:13.0px;height:9.5px;background:#84f07a"></div>
<div class="abs" style="left:1136.0px;top:672.8px;width:13.0px;height:3.0px;background:#bf8ff5"></div>
<svg class="abs" style="left:1149.0px;top:663.3px" width="2.5" height="12.5"><rect x="0.5" y="0.5" width="1.5" height="11.5" fill="#f3f3f5" stroke="#9a9a9a" stroke-width="1" stroke-dasharray="2.2 1.8"/></svg>
<div class="abs" style="left:439.8px;top:663.3px;width:0.8px;height:12.5px;background:rgba(255,255,255,0.7)"></div>
<div class="abs" style="left:508.5px;top:663.3px;width:0.8px;height:12.5px;background:rgba(255,255,255,0.7)"></div>
<div class="abs" style="left:539.4px;top:663.3px;width:0.8px;height:12.5px;background:rgba(255,255,255,0.7)"></div>
<div class="abs" style="left:549.1px;top:663.3px;width:0.8px;height:12.5px;background:rgba(255,255,255,0.7)"></div>
<div class="abs" style="left:1008.2px;top:663.3px;width:0.8px;height:12.5px;background:rgba(255,255,255,0.7)"></div>
<div class="abs" style="left:1010.5px;top:663.3px;width:0.8px;height:12.5px;background:rgba(255,255,255,0.7)"></div>
<div class="abs" style="left:1067.0px;top:663.3px;width:0.8px;height:12.5px;background:rgba(255,255,255,0.35)"></div>
<div class="abs" style="left:1087.7px;top:663.3px;width:0.8px;height:12.5px;background:rgba(255,255,255,0.35)"></div>
<div class="abs" style="left:1108.0px;top:663.3px;width:0.8px;height:12.5px;background:rgba(255,255,255,0.35)"></div>
<div class="tl" style="left:292.3px;top:681px">04:00</div>
<div class="tl" style="left:410.0px;top:681px">06:00</div>
<div class="tl" style="left:527.7px;top:681px">08:00</div>
<div class="tl" style="left:645.4px;top:681px">10:00</div>
<div class="tl" style="left:763.1px;top:681px">12:00</div>
<div class="tl" style="left:880.8px;top:681px">14:00</div>
<div class="tl" style="left:998.5px;top:681px">16:00</div>
<div class="tl" style="left:1116.2px;top:681px">18:00</div>

</body></html>
